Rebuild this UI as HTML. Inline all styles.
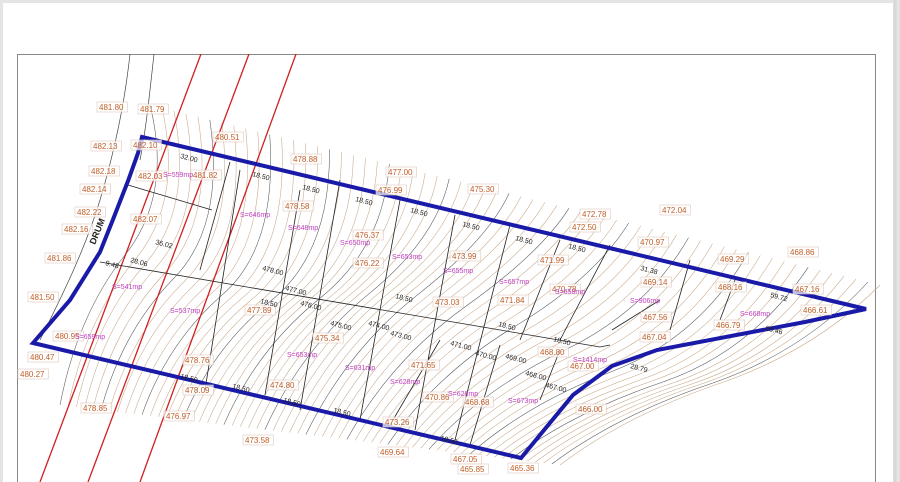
<!DOCTYPE html>
<html><head><meta charset="utf-8">
<style>
html,body{margin:0;padding:0;width:900px;height:482px;overflow:hidden;background:#fff;font-family:"Liberation Sans",sans-serif}
#wrap{position:absolute;left:0;top:0;width:900px;height:482px;background:#e4e4e4}
#sheet{position:absolute;left:3px;top:3px;width:890px;height:479px;background:#fff}
svg{position:absolute;left:0;top:0}
.l{font-size:8px;fill:#c0602a}
.m{font-size:7px;fill:#c040c0}
.d{font-size:7px;fill:#222}
</style></head><body>
<div id="wrap"><div id="sheet"></div></div>
<svg id="s" width="900" height="482" viewBox="0 0 900 482">
<rect x="17.5" y="54.5" width="858" height="440" fill="none" stroke="#888" stroke-width="1"/>
<line x1="895" y1="0" x2="895" y2="482" stroke="#d8d8d8" stroke-width="3"/>
<g id="cont" fill="none" stroke-width="0.55"></g>
<path d="M130 54 C125 100 115 150 100 200 C85 250 60 300 40 340" fill="none" stroke="#444" stroke-width="0.7"/>
<path d="M154 54 C150 90 146 130 140 160" fill="none" stroke="#444" stroke-width="0.7"/>
<line x1="201" y1="54" x2="40" y2="482" stroke="#d02020" stroke-width="1.3"/>
<line x1="249" y1="54" x2="88" y2="482" stroke="#d02020" stroke-width="1.3"/>
<line x1="296" y1="54" x2="140" y2="482" stroke="#d02020" stroke-width="1.3"/>
<g stroke="#222" stroke-width="0.8" fill="none">
<path d="M128 185 L212 210 M100 262 L600 347 L610 345 M240 170 L205 390 M230 162 L200 270 M300 190 L265 395 M340 180 L300 410 M400 200 L360 420 M455 215 L415 430 M510 225 L455 440 M560 240 L520 340 M610 245 L560 340 M690 260 L670 330 M735 280 L720 320 M440 340 L390 425 M500 345 L470 445 M560 350 L540 400 M612 330 L660 300"/>
</g>
<path d="M142 137 L866 309 L805 322 L657 350 L612 366 L573 395 L521 458 L33 343 L70 300 L100 252 L112 222 L128 181 L138 153 Z" fill="none" stroke="#1a1aa8" stroke-width="4" stroke-linejoin="miter"/>
<g id="labels"></g>
</svg>
<script>
var g=document.getElementById('cont'),h='';
var N=62;
for(var i=0;i<N;i++){
 var t=i/(N-1);
 var sx=60+t*500, sy=405+t*60;
 var ex=150+t*730, ey=105+t*180;
 var mx=(sx+ex)/2+ (40-40*t)*(0.5), my=(sy+ey)/2+20*Math.sin(t*9);
 var c1x=sx+(mx-sx)*0.5-15, c1y=sy+(my-sy)*0.6;
 var c2x=mx+(ex-mx)*0.4+10, c2y=my+(ey-my)*0.3+10*Math.cos(t*7);
 var col=(i%5==0)?'#555':'#c8a888';
 h+='<path d="M'+sx.toFixed(1)+' '+sy.toFixed(1)+' Q'+c1x.toFixed(1)+' '+c1y.toFixed(1)+' '+mx.toFixed(1)+' '+my.toFixed(1)+' T'+ex.toFixed(1)+' '+ey.toFixed(1)+'" stroke="'+col+'"/>';
}
g.innerHTML=h;
var L=[["481.80",99,110],["481.79",140,112],["482.13",93,149],["482.10",133,148],["482.18",91,174],["482.14",82,192],["482.22",77,215],["482.16",64,232],["481.86",47,261],["481.50",30,300],["480.95",55,339],["480.47",30,360],["480.27",20,377],["478.85",83,411],["476.97",166,419],["473.58",245,443],["480.51",215,140],["478.88",293,162],["477.00",388,175],["476.99",378,193],["475.30",470,192],["472.78",582,217],["472.04",662,213],["472.50",572,230],["470.97",640,245],["469.29",720,262],["468.86",790,255],["468.16",718,290],["467.16",795,292],["466.61",803,313],["466.79",716,328],["467.56",643,320],["467.04",642,340],["469.14",643,285],["471.99",540,263],["471.84",500,303],["470.78",552,292],["473.99",452,259],["473.03",435,305],["476.22",355,266],["478.58",285,209],["476.37",355,238],["477.89",247,313],["475.34",315,341],["474.80",270,388],["473.26",385,425],["470.86",425,400],["471.65",411,368],["468.68",465,405],["468.80",540,355],["467.00",570,369],["469.64",380,455],["467.05",453,462],["465.85",460,472],["465.36",510,471],["466.00",578,412],["478.76",185,363],["478.09",185,393],["482.07",133,222],["482.03",138,179],["481.82",193,178]];
var M=[["S=559mp",163,177],["S=646mp",240,217],["S=648mp",288,230],["S=650mp",340,245],["S=653mp",392,259],["S=655mp",443,273],["S=657mp",499,284],["S=658mp",555,294],["S=906mp",630,303],["S=668mp",740,316],["S=1414mp",573,362],["S=541mp",112,289],["S=537mp",170,313],["S=659mp",75,339],["S=653mp",287,357],["S=631mp",345,370],["S=628mp",390,384],["S=628mp",448,396],["S=673mp",508,403]];
var D=[["32.00",180,158],["18.50",252,176],["18.50",302,189],["18.50",355,201],["18.50",410,212],["18.50",462,226],["18.50",515,240],["18.50",568,248],["31.38",640,270],["59.72",770,297],["65.46",765,330],["28.79",630,368],["18.50",260,303],["18.50",395,298],["18.50",498,326],["18.50",553,341],["18.50",180,378],["18.50",232,388],["18.50",283,402],["18.50",333,412],["18.50",440,440],["476.00",300,305],["475.00",330,325],["474.00",368,325],["473.00",390,335],["471.00",450,345],["470.00",475,355],["469.00",505,358],["468.00",525,375],["467.00",545,387],["477.00",285,290],["478.00",262,270],["28.06",130,262],["36.02",155,244],["9.48",105,265]];
var o='';
L.forEach(function(a){var w=a[0].length*4.4+4;o+='<rect x="'+(a[1]-2)+'" y="'+(a[2]-8)+'" width="'+w+'" height="10" fill="#fff" fill-opacity="0.7" stroke="#e0c8b8" stroke-width="0.6"/><text class="l" x="'+a[1]+'" y="'+a[2]+'">'+a[0]+'</text>';});
M.forEach(function(a){o+='<text class="m" x="'+a[1]+'" y="'+a[2]+'">'+a[0]+'</text>';});
D.forEach(function(a){o+='<text class="d" x="'+a[1]+'" y="'+a[2]+'" transform="rotate(15 '+a[1]+' '+a[2]+')">'+a[0]+'</text>';});
o+='<text x="95" y="245" font-size="9" font-weight="bold" fill="#222" transform="rotate(-68 95 245)">DRUM</text>';
document.getElementById('labels').innerHTML=o;
</script>
</body></html>
